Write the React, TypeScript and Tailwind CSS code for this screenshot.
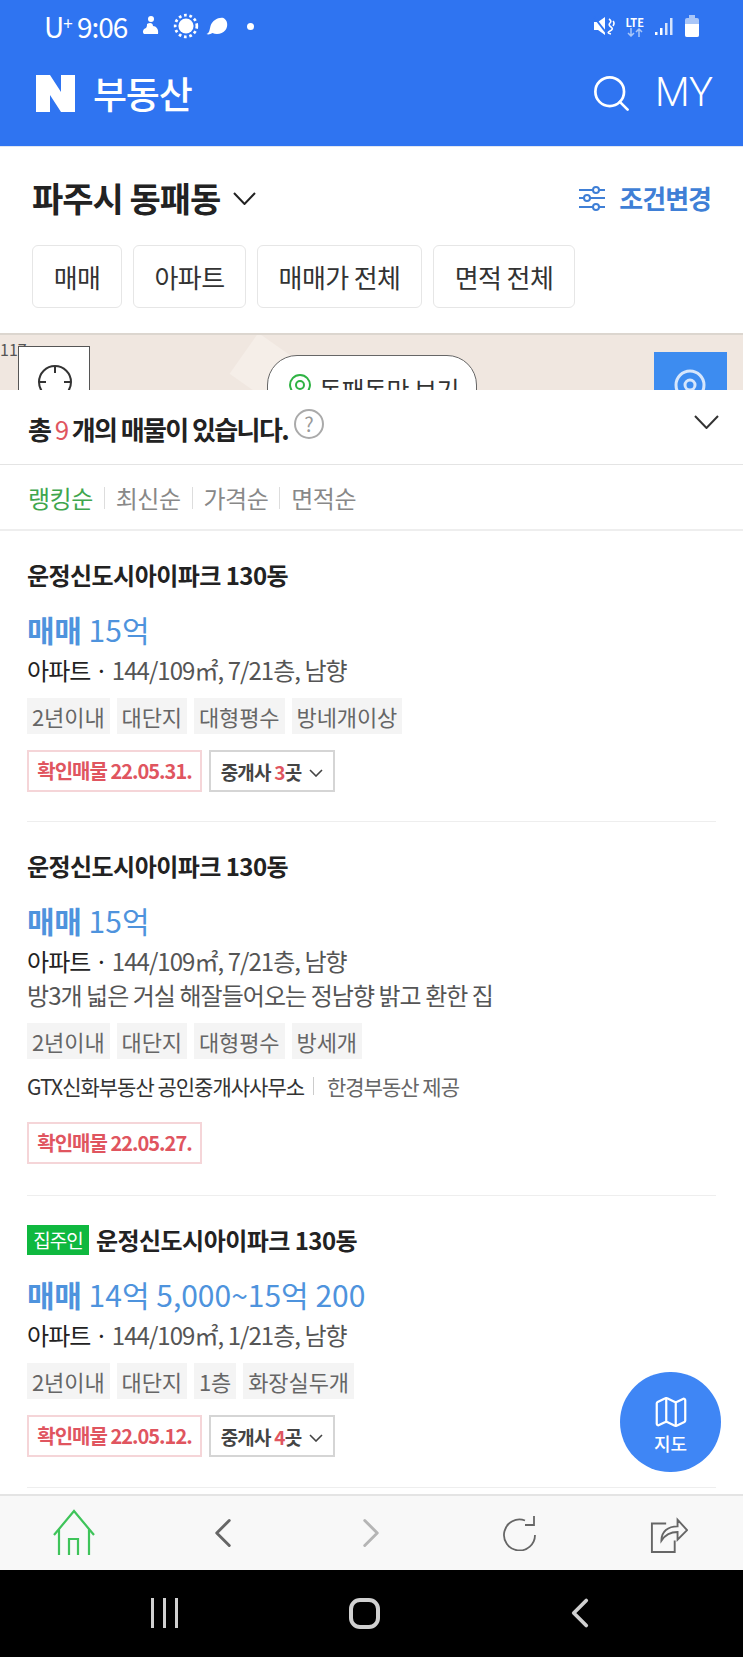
import React from 'react';
import { Search, ChevronLeft, ChevronRight, Map as MapIcon } from 'lucide-react';

const font = { fontFamily: '"Noto Sans CJK KR", "Noto Sans", sans-serif' };

interface Listing {
  owner?: boolean;
  price: string;
  info: string;
  desc?: string;
  tags: string[];
  agency?: boolean;
  confirmed: string;
  brokers?: number;
  height: string;
}

const listings: Listing[] = [
  {
    price: '15억',
    info: '144/109㎡, 7/21층, 남향',
    tags: ['2년이내', '대단지', '대형평수', '방네개이상'],
    confirmed: '22.05.31.',
    brokers: 3,
    height: 'h-[291px]',
  },
  {
    price: '15억',
    info: '144/109㎡, 7/21층, 남향',
    desc: '방3개 넓은 거실 해잘들어오는 정남향 밝고 환한 집',
    tags: ['2년이내', '대단지', '대형평수', '방세개'],
    agency: true,
    confirmed: '22.05.27.',
    height: 'h-[374px]',
  },
  {
    owner: true,
    price: '14억 5,000~15억 200',
    info: '144/109㎡, 1/21층, 남향',
    tags: ['2년이내', '대단지', '1층', '화장실두개'],
    confirmed: '22.05.12.',
    brokers: 4,
    height: 'h-[292px]',
  },
];

// wide shallow chevron used all over the page
function Chevron({ w, h, color, sw = 2 }: { w: number; h: number; color: string; sw?: number }) {
  return (
    <svg width={w} height={h} viewBox={`0 0 ${w} ${h}`} fill="none" stroke={color} strokeWidth={sw}>
      <path d={`M1 1L${w / 2} ${h - 1}L${w - 1} 1`} />
    </svg>
  );
}

function StatusBar() {
  return (
    <div className="flex h-[50px] items-center justify-between pl-[44px] pr-[43px] pt-[2px] text-white">
      <div className="flex items-center">
        <span className="w-[97px] whitespace-nowrap text-[28px] leading-none tracking-[-1px]">
          U<sup className="text-[17px]">+</sup> 9:06
        </span>
        <svg className="ml-[1px]" width="18" height="24" viewBox="0 0 18 22" fill="#fff">
          <circle cx="9" cy="4" r="3" />
          <path d="M5 9c3-2 6-1 6 2 3 0 6 3 5 8H2c-2-2-1-5 2-6 1-1 1-3 1-4z" />
        </svg>
        <svg className="ml-[13px]" width="26" height="26" viewBox="0 0 24 24" fill="#fff">
          <circle cx="12" cy="12" r="7" />
          <circle cx="12" cy="12" r="10" fill="none" stroke="#fff" strokeWidth="2.5" strokeDasharray="2.5 2.5" />
        </svg>
        <svg className="ml-[6px]" width="24" height="20" viewBox="0 0 23 20" fill="#fff">
          <path d="M1 18c3-1 3-4 4-8 2-6 8-9 13-8 4 2 5 8 2 12-3 4-9 5-13 3-2 1-4 2-6 1z" />
        </svg>
        <span className="ml-[18px] h-[7px] w-[7px] rounded-full bg-white" />
      </div>
      <div className="flex items-center gap-[10px]">
        <svg width="22" height="24" viewBox="0 0 22 24" fill="#fff">
          <path d="M1 8h4l7-5v18l-7-5H1z" />
          <path d="M1 3l14 18" stroke="#2f74f1" strokeWidth="2" />
          <path d="M16 5q3 2 1 4t1 4-1 4 1 3M20 7q2 2 0 5" fill="none" stroke="#fff" strokeWidth="1.6" />
        </svg>
        <div className="flex flex-col items-center">
          <span className="text-[11px] font-bold leading-[12px]">LTE</span>
          <svg width="16" height="9" viewBox="0 0 16 9" fill="none" stroke="#a9c6f8" strokeWidth="1.5">
            <path d="M4 0v8M1 5l3 3 3-3M12 9V1M9 4l3-3 3 3" />
          </svg>
        </div>
        <svg width="20" height="20" viewBox="0 0 20 20" fill="#fff">
          <rect x="1" y="16" width="2.5" height="3" />
          <rect x="6" y="12" width="2.5" height="7" />
          <rect x="11" y="7" width="2.5" height="12" opacity="0.8" />
          <rect x="16" y="2" width="2.5" height="17" opacity="0.8" />
        </svg>
        <svg width="16" height="24" viewBox="0 0 16 24">
          <path d="M5 1h6v3h2a2 2 0 012 2v15a2 2 0 01-2 2H3a2 2 0 01-2-2V6a2 2 0 012-2h2z" fill="#a9c6f8" />
          <path d="M1 10h14v11a2 2 0 01-2 2H3a2 2 0 01-2-2z" fill="#fff" />
        </svg>
      </div>
    </div>
  );
}

function TopBar() {
  return (
    <div className="h-[146px] bg-[#2f74f1] text-white">
      <StatusBar />
      <div className="flex h-[70px] items-center justify-between pl-[36px] pr-[30px] pt-[16px]">
        <div className="flex items-center gap-[18px]">
          <svg width="39" height="37" viewBox="0 0 39 37" fill="#fff">
            <path d="M0 0h14l11 17V0h14v37H25L14 20v17H0z" />
          </svg>
          <span className="text-[37px] font-medium leading-none tracking-[-1.2px]">부동산</span>
        </div>
        <div className="flex items-center gap-[22px]">
          <Search className="h-[43px] w-[43px]" strokeWidth={1.5} />
          <span className="text-[40px] font-light leading-none" style={{ fontFamily: 'Roboto, sans-serif' }}>
            MY
          </span>
        </div>
      </div>
    </div>
  );
}

function Filters() {
  return (
    <div className="h-[187px] border-t border-[#dfe6f2] bg-white px-[32px]">
      <div className="flex h-[98px] items-center justify-between pt-[4px]">
        <div className="flex items-center gap-[13px]">
          <span className="text-[34px] font-bold leading-none tracking-[-1px] text-[#222]">파주시 동패동</span>
          <Chevron w={23} h={13} color="#222" />
        </div>
        <div className="flex items-center gap-[13px] text-[#3f7fd6]">
          <svg width="28" height="28" viewBox="0 0 28 28" fill="none" stroke="currentColor" strokeWidth="2">
            <path d="M1 6h14M21 6h6M1 14h5M12 14h15M1 23h14M21 23h6" />
            <circle cx="18" cy="6" r="3" />
            <circle cx="9" cy="14" r="3" />
            <circle cx="18" cy="23" r="3" />
          </svg>
          <span className="text-[26px] font-bold leading-none tracking-[-1px]">조건변경</span>
        </div>
      </div>
      <div className="flex gap-[11px]">
        {[
          ['매매', 'w-[90px]'],
          ['아파트', 'w-[113px]'],
          ['매매가 전체', 'w-[165px]'],
          ['면적 전체', 'w-[142px]'],
        ].map(([label, w]) => (
          <div
            key={label}
            className={`flex h-[63px] items-center justify-center rounded-[6px] border border-[#e6e6e6] text-[26px] leading-none tracking-[-0.6px] text-[#333] ${w}`}
          >
            {label}
          </div>
        ))}
      </div>
    </div>
  );
}

function MapStrip() {
  return (
    <div className="relative h-[57px] overflow-hidden border-t-2 border-[#dcd6cf] bg-[#f0e7e0]">
      <div className="absolute left-[240px] top-[6px] h-[50px] w-[44px] rotate-[35deg] bg-[#f5eee8]" />
      <span className="absolute left-0 top-[6px] text-[16px] leading-none text-[#555]">117</span>
      <div className="absolute left-[18px] top-[11px] h-[80px] w-[72px] border border-[#555] bg-white">
        <svg className="absolute left-[18px] top-[17px]" width="36" height="36" viewBox="0 0 36 36" fill="none" stroke="#333" strokeWidth="2">
          <circle cx="18" cy="18" r="16" />
          <path d="M18 2v7M2 18h7M27 18h7" />
        </svg>
      </div>
      <div className="absolute left-[267px] top-[20px] flex h-[70px] w-[210px] items-start gap-[7px] rounded-[30px] border border-[#666] bg-white pl-[20px] pt-[18px]">
        <svg width="24" height="30" viewBox="0 0 24 30" fill="none" stroke="#2fb344" strokeWidth="2">
          <path d="M12 1c6 0 10 5 10 10 0 6-6 12-10 18C8 23 2 17 2 11 2 6 6 1 12 1z" />
          <circle cx="12" cy="11" r="4" />
        </svg>
        <span className="text-[25px] leading-[30px] tracking-[-0.5px] text-[#333]">동패동만 보기</span>
      </div>
      <div className="absolute left-[654px] top-[17px] h-[60px] w-[73px] bg-[#3d8cf0]">
        <svg className="absolute left-[20px] top-[13px]" width="32" height="40" viewBox="0 0 32 40" fill="none" stroke="#d6e6fc" strokeWidth="3">
          <circle cx="16" cy="20" r="14" />
          <circle cx="16" cy="20" r="5" />
        </svg>
      </div>
    </div>
  );
}

function Summary() {
  return (
    <>
      <div className="flex h-[75px] items-center justify-between border-b border-[#e4e4e4] pl-[28px] pr-[24px] pt-[4px]">
        <div className="flex items-center">
          <span className="text-[26px] font-bold leading-none tracking-[-1.6px] text-[#222]">
            총 <span className="font-normal text-[#e0555f]">9</span> 개의 매물이 있습니다.
          </span>
          <span className="mb-[10px] ml-[6px] flex h-[30px] w-[30px] items-center justify-center rounded-full border-2 border-[#aaa] text-[20px] leading-none text-[#999]">
            ?
          </span>
        </div>
        <div className="mb-[14px]">
          <Chevron w={25} h={14} color="#333" />
        </div>
      </div>
      <div className="flex h-[66px] items-center border-b-2 border-[#eee] pl-[28px] pt-[2px] text-[24px] leading-none tracking-[-0.5px] text-[#888]">
        <span className="text-[#3fa64e]">랭킹순</span>
        <span className="mx-[11px] h-[22px] w-px bg-[#ddd]" />
        <span>최신순</span>
        <span className="mx-[11px] h-[22px] w-px bg-[#ddd]" />
        <span>가격순</span>
        <span className="mx-[11px] h-[22px] w-px bg-[#ddd]" />
        <span>면적순</span>
      </div>
    </>
  );
}

function ListingCard({ item }: { item: Listing }) {
  return (
    <div className={`mx-[27px] flex flex-col border-b border-[#eee] ${item.height}`}>
      <div className="mt-[30px] flex h-[27px] shrink-0 items-center">
        {item.owner && (
          <span className="mr-[7px] flex h-[30px] w-[62px] items-center justify-center bg-[#0fb83f] text-[19px] leading-none tracking-[-1px] text-white">
            집주인
          </span>
        )}
        <span className="text-[24px] font-bold leading-none tracking-[-0.55px] text-[#222]">운정신도시아이파크 130동</span>
      </div>
      <div className="mt-[23px] flex h-[36px] items-center text-[#4e93dd]">
        <span className="text-[30px] font-bold leading-none tracking-[-0.3px]">매매</span>
        <span className="ml-[7px] text-[30px] leading-none">{item.price}</span>
      </div>
      <div className="mt-[6px] h-[34px] text-[24px] leading-[34px] tracking-[-0.95px] text-[#555]">
        <span className="text-[#222]">아파트 · </span>
        {item.info}
      </div>
      {item.desc && (
        <div className="h-[34px] text-[24px] leading-[34px] tracking-[-0.95px] text-[#555]">{item.desc}</div>
      )}
      <div className="mt-[11px] flex gap-[7px]">
        {item.tags.map((t) => (
          <span key={t} className="flex h-[36px] items-center bg-[#f4f4f4] px-[5px] text-[22px] leading-none tracking-[-0.1px] text-[#666]">
            {t}
          </span>
        ))}
      </div>
      {item.agency && (
        <div className="mt-[10px] flex h-[34px] items-center text-[21px] leading-none tracking-[-1px] text-[#333]">
          GTX신화부동산 공인중개사사무소
          <span className="ml-[9px] mr-[13px] h-[18px] w-px bg-[#ccc]" />
          <span className="text-[#666]">한경부동산 제공</span>
        </div>
      )}
      <div className={`flex gap-[7px] ${item.agency ? 'mt-[19px]' : 'mt-[16px]'}`}>
        <span className="flex h-[42px] w-[175px] items-center justify-center border-2 border-[#f5d5d8] text-[20px] font-bold leading-none tracking-[-1px] text-[#e0555f]">
          확인매물 {item.confirmed}
        </span>
        {item.brokers && (
          <span className="flex h-[42px] w-[126px] items-center justify-center border-2 border-[#d5d5d5] text-[19px] font-bold leading-none tracking-[-0.8px] text-[#444]">
            중개사&nbsp;<span className="text-[#e0555f]">{item.brokers}</span>곳
            <span className="ml-[8px] mt-[4px]">
              <Chevron w={14} h={8} color="#444" sw={1.6} />
            </span>
          </span>
        )}
      </div>
    </div>
  );
}

function Toolbar() {
  return (
    <div className="grid h-[76px] shrink-0 grid-cols-5 items-center justify-items-center border-t-2 border-[#e4e4e4] bg-[#f8f8f8]">
      <svg width="44" height="48" viewBox="0 0 44 48" fill="none" stroke="#3fc45a" strokeWidth="2.2">
        <path d="M2 26L22 2l20 24M7 46V20M37 46V20M17 46V30h9v16" />
      </svg>
      <ChevronLeft className="h-[50px] w-[50px] text-[#666]" strokeWidth={1.4} />
      <ChevronRight className="h-[50px] w-[50px] text-[#b5b5b5]" strokeWidth={1.4} />
      <svg width="34" height="36" viewBox="0 0 34 36" fill="none" stroke="#666" strokeWidth="1.8">
        <path d="M22 5.500A15.500 15.500 0 1032 20" />
        <path d="M31 1v9H22" />
      </svg>
      <svg width="38" height="42" viewBox="0 0 40 44" fill="none" stroke="#666" strokeWidth="2">
        <path d="M17 12H2v30h24V30" />
        <path d="M12 30c0-10 7-15 17-15V8l10 11-10 10v-8c-8 0-13 3-17 9z" />
      </svg>
    </div>
  );
}

function NavBar() {
  return (
    <div className="flex h-[87px] shrink-0 items-start justify-between bg-black pl-[151px] pr-[138px] pt-[28px]">
      <div className="flex gap-[9px]">
        <span className="h-[30px] w-[3px] bg-[#d0d0d0]" />
        <span className="h-[30px] w-[3px] bg-[#d0d0d0]" />
        <span className="h-[30px] w-[3px] bg-[#d0d0d0]" />
      </div>
      <span className="-ml-[4px] h-[31px] w-[31px] rounded-[11px] border-[4px] border-[#d0d0d0]" />
      <ChevronLeft className="-mt-[10px] h-[50px] w-[50px] text-[#d0d0d0]" strokeWidth={1.8} />
    </div>
  );
}

export default function App() {
  return (
    <div className="relative flex h-[1657px] w-[743px] flex-col overflow-hidden bg-white" style={font}>
      <TopBar />
      <Filters />
      <MapStrip />
      <div className="min-h-0 flex-1 overflow-hidden">
        <Summary />
        {listings.map((item, i) => (
          <ListingCard key={i} item={item} />
        ))}
      </div>
      <Toolbar />
      <NavBar />
      <div className="absolute left-[620px] top-[1372px] flex h-[100px] w-[101px] flex-col items-center justify-center rounded-full bg-[#3f86f5] text-white">
        <MapIcon className="h-[38px] w-[38px]" strokeWidth={1.4} />
        <span className="mt-[3px] text-[18px] font-medium leading-none">지도</span>
      </div>
    </div>
  );
}
